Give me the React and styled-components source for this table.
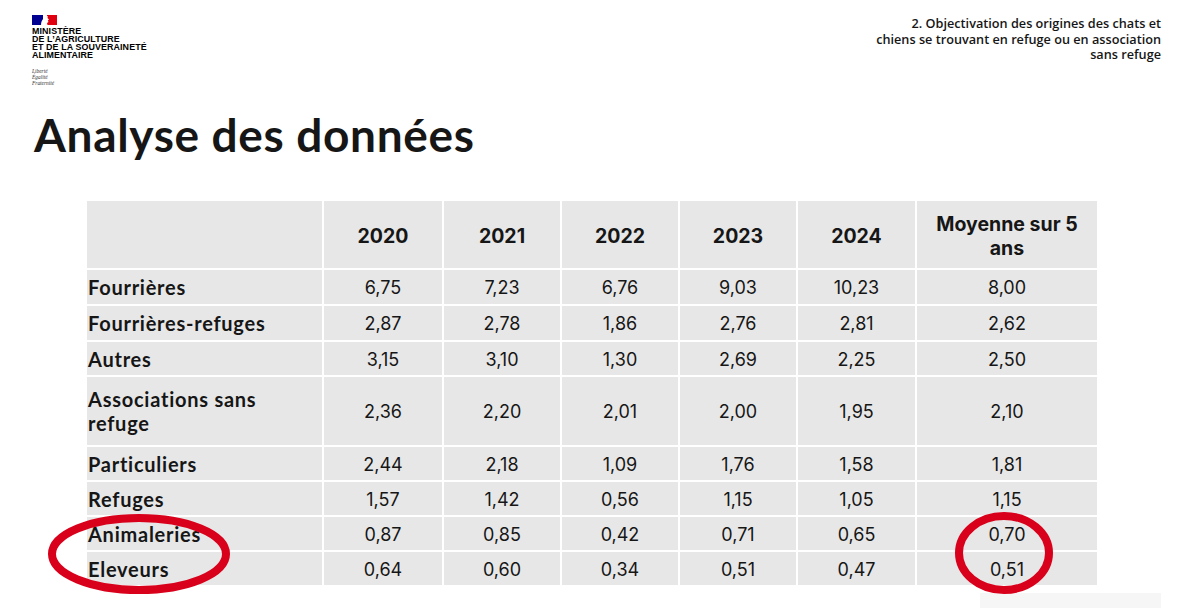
import React from "react";
import styled, { createGlobalStyle } from "styled-components";

const Global = createGlobalStyle`
  html, body { margin: 0; padding: 0; background: #fff; }
  body { font-family: Lato, "Noto Sans", sans-serif; color: #161616; }
`;

const Page = styled.div`
  position: relative;
  width: 1185px;
  height: 608px;
  overflow: hidden;
  background: #fff;
`;

const TopBar = styled.header`
  display: flex;
  justify-content: space-between;
  align-items: flex-start;
  padding: 15px 24px 0 32px;
  height: 88px;
  box-sizing: border-box;
`;

const Logo = styled.div`
  display: flex;
  flex-direction: column;
`;

const MinistryName = styled.div`
  margin-top: 2px;
  font-family: "Liberation Sans", Arial, sans-serif;
  font-weight: 700;
  font-size: 8.9px;
  line-height: 8px;
  letter-spacing: 0.1px;
  color: #000;
  text-transform: uppercase;
`;

const Motto = styled.div`
  margin-top: 9px;
  font-family: "Liberation Serif", serif;
  font-style: italic;
  font-size: 5.4px;
  line-height: 6px;
  color: #333;
`;

const Section = styled.div`
  text-align: right;
  font-family: "Open Sans", sans-serif;
  font-weight: 600;
  font-size: 12.7px;
  line-height: 15.5px;
  color: #161616;
  padding-top: 1px;
`;

const Title = styled.h1`
  margin: 21px 0 0 34px;
  font-family: Lato, sans-serif;
  font-weight: 700;
  font-size: 46px;
  line-height: 52px;
  letter-spacing: 0.65px;
  color: #161616;
`;

const Table = styled.div`
  margin: 40px 0 0 87px;
  width: 1010px;
  display: grid;
  grid-template-columns: 235px 118px 116px 116px 116px 117px 180px;
  grid-template-rows: 67px 34px 34px 33px 68px 33px 33px 33px 33px;
  gap: 2px;
  background: #fff;
`;

const Cell = styled.div`
  background: #e7e7e7;
  display: flex;
  align-items: center;
  justify-content: ${(p) => (p.$label ? "flex-start" : "center")};
  text-align: ${(p) => (p.$label ? "left" : "center")};
  padding: ${(p) => (p.$label ? "0 0 0 1px" : "2px 6px 0")};
  font-family: ${(p) => (p.$label ? "Lato, sans-serif" : "Inter, sans-serif")};
  font-weight: ${(p) => (p.$bold ? 700 : 400)};
  font-size: ${(p) => (p.$head ? "19.5px" : p.$label ? "20px" : "18px")};
  letter-spacing: ${(p) => (p.$label ? "0.75px" : "0")};
  line-height: 24px;
  color: #161616;
`;

const Ellipse = styled.svg`
  position: absolute;
  pointer-events: none;
`;

const Faint = styled.div`
  position: absolute;
  left: 980px;
  top: 593px;
  width: 181px;
  height: 15px;
  background: #f6f6f6;
`;

const years = ["2020", "2021", "2022", "2023", "2024"];
const rows = [
  ["Fourrières", "6,75", "7,23", "6,76", "9,03", "10,23", "8,00"],
  ["Fourrières-refuges", "2,87", "2,78", "1,86", "2,76", "2,81", "2,62"],
  ["Autres", "3,15", "3,10", "1,30", "2,69", "2,25", "2,50"],
  ["Associations sans refuge", "2,36", "2,20", "2,01", "2,00", "1,95", "2,10"],
  ["Particuliers", "2,44", "2,18", "1,09", "1,76", "1,58", "1,81"],
  ["Refuges", "1,57", "1,42", "0,56", "1,15", "1,05", "1,15"],
  ["Animaleries", "0,87", "0,85", "0,42", "0,71", "0,65", "0,70"],
  ["Eleveurs", "0,64", "0,60", "0,34", "0,51", "0,47", "0,51"],
];

function Flag() {
  return (
    <svg width="25" height="10" viewBox="0 0 25 10">
      <rect x="0" y="0" width="11" height="10" fill="#000091" />
      <rect x="11" y="0" width="4" height="10" fill="#fff" />
      <rect x="15" y="0" width="10" height="10" fill="#e1000f" />
      <path d="M9 10 C9 7 10 5 11.5 3.5 C13 2 14.5 1.5 16 1 L15.5 3 L17 4.5 L15.8 5.5 L16.5 7 L15 8 L15.5 10 Z" fill="#fff" />
    </svg>
  );
}

export default function App() {
  return (
    <Page>
      <Global />
      <TopBar>
        <Logo>
          <Flag />
          <MinistryName>
            Ministère
            <br />
            de l’agriculture
            <br />
            et de la souveraineté
            <br />
            alimentaire
          </MinistryName>
          <Motto>
            Liberté
            <br />
            Égalité
            <br />
            Fraternité
          </Motto>
        </Logo>
        <Section>
          2. Objectivation des origines des chats et
          <br />
          chiens se trouvant en refuge ou en association
          <br />
          sans refuge
        </Section>
      </TopBar>
      <Title>Analyse des données</Title>
      <Table>
        <Cell $label />
        {years.map((y) => (
          <Cell key={y} $head $bold>
            {y}
          </Cell>
        ))}
        <Cell $head $bold>
          Moyenne sur 5
          <br />
          ans
        </Cell>
        {rows.map((r) =>
          r.map((v, i) =>
            i === 0 ? (
              <Cell key={r[0] + i} $label $bold>
                {r[0] === "Associations sans refuge" ? (
                  <span>
                    Associations sans
                    <br />
                    refuge
                  </span>
                ) : (
                  v
                )}
              </Cell>
            ) : (
              <Cell key={r[0] + i}>{v}</Cell>
            )
          )
        )}
      </Table>
      <Faint />
      <Ellipse style={{ left: 46, top: 513 }} width="186" height="82" viewBox="0 0 186 82">
        <ellipse cx="93" cy="41" rx="87" ry="36" fill="none" stroke="#d9001b" strokeWidth="8" />
      </Ellipse>
      <Ellipse style={{ left: 954, top: 511 }} width="100" height="84" viewBox="0 0 100 84">
        <ellipse cx="50" cy="42" rx="45" ry="37" fill="none" stroke="#d9001b" strokeWidth="8" />
      </Ellipse>
    </Page>
  );
}
